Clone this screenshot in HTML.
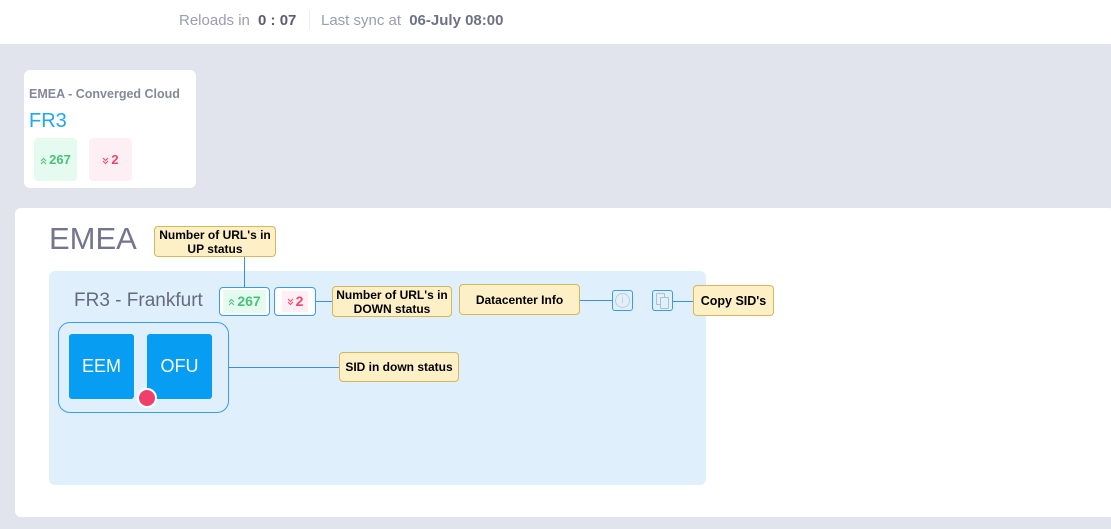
<!DOCTYPE html>
<html><head><style>
*{margin:0;padding:0;box-sizing:border-box}
body{width:1111px;height:529px;background:#e2e4ed;font-family:"Liberation Sans",sans-serif;position:relative;overflow:hidden}
.a{position:absolute}
.note{position:absolute;background:#fdf0c6;border:1px solid #d9b65a;border-radius:4px;font-weight:bold;font-size:12px;color:#000;text-align:center;line-height:14px;display:flex;align-items:center;justify-content:center}
.ln{position:absolute;background:#3a8ee6}
svg.ch{display:inline-block;vertical-align:middle;margin-right:2px}
</style></head><body>
<div class="a" style="left:0;top:0;width:1111px;height:44px;background:#fff"></div>
<div class="a" style="left:179px;top:12px;font-size:15px;color:#9a9db3">Reloads in <b style="color:#5a5d70;margin-left:4px">0 : 07</b></div>
<div class="a" style="left:309px;top:10px;width:1px;height:20px;background:#eee"></div>
<div class="a" style="left:321px;top:12px;font-size:15px;color:#9a9db3">Last sync at <b style="color:#6f7286;margin-left:4px">06-July 08:00</b></div>

<div class="a" style="left:24px;top:70px;width:172px;height:118px;background:#fff;border-radius:6px"></div>
<div class="a" style="left:29px;top:87px;font-size:12.5px;color:#70738a;font-weight:bold;opacity:.85">EMEA - Converged Cloud</div>
<div class="a" style="left:29px;top:110px;font-size:20px;color:#1ea7f5">FR3</div>
<div class="a" style="left:34px;top:138px;width:43px;height:43px;background:#e6fbef;border-radius:4px;color:#48c27a;font-size:13px;font-weight:bold;line-height:43px;text-align:center"><svg class="ch" width="7" height="8" viewBox="0 0 7 8"><path d="M1 4L3.5 1.5 6 4M1 7L3.5 4.5 6 7" stroke="#48c27a" fill="none"/></svg>267</div>
<div class="a" style="left:89px;top:138px;width:43px;height:43px;background:#fdeff3;border-radius:4px;color:#f0466d;font-size:13px;font-weight:bold;line-height:43px;text-align:center"><svg class="ch" width="7" height="8" viewBox="0 0 7 8"><path d="M1 1L3.5 3.5 6 1M1 4L3.5 6.5 6 4" stroke="#f0466d" fill="none"/></svg>2</div>

<div class="a" style="left:15px;top:208px;width:1100px;height:309px;background:#fff;border-radius:6px"></div>
<div class="a" style="left:49px;top:221px;font-size:31px;color:#73768e">EMEA</div>
<div class="a" style="left:49px;top:271px;width:657px;height:214px;background:#dfeffc;border-radius:6px"></div>
<div class="a" style="left:74px;top:290px;font-size:19px;color:#666a7e">FR3 - Frankfurt</div>

<div class="ln" style="left:244px;top:257px;width:1px;height:30px"></div>
<div class="a" style="left:219px;top:287px;width:51px;height:29px;border:1px solid #3a9bf0;border-radius:4px;background:#fff"></div>
<div class="a" style="left:223px;top:290px;width:43px;height:23px;background:#e6fbef;color:#48c27a;font-size:14px;font-weight:bold;line-height:23px;text-align:center"><svg class="ch" width="7" height="8" viewBox="0 0 7 8"><path d="M1 4L3.5 1.5 6 4M1 7L3.5 4.5 6 7" stroke="#48c27a" fill="none"/></svg>267</div>
<div class="a" style="left:274px;top:287px;width:42px;height:29px;border:1px solid #3a9bf0;border-radius:4px;background:#fff"></div>
<div class="a" style="left:282px;top:291px;width:26px;height:21px;background:#fdeff3;color:#f0466d;font-size:14px;font-weight:bold;line-height:21px;text-align:center"><svg class="ch" width="7" height="8" viewBox="0 0 7 8"><path d="M1 1L3.5 3.5 6 1M1 4L3.5 6.5 6 4" stroke="#f0466d" fill="none"/></svg>2</div>
<div class="ln" style="left:316px;top:301px;width:16px;height:1px"></div>

<div class="note" style="left:154px;top:226px;width:122px;height:31px">Number of URL's in<br>UP status</div>
<div class="note" style="left:332px;top:286px;width:120px;height:31px">Number of URL's in<br>DOWN status</div>
<div class="note" style="left:459px;top:284px;width:121px;height:31px">Datacenter Info</div>
<div class="ln" style="left:580px;top:300px;width:32px;height:1px"></div>
<div class="a" style="left:612px;top:290px;width:21px;height:21px;border:1px solid #3a9bf0;border-radius:3px"></div>
<div class="a" style="left:615px;top:293px;width:15px;height:15px;border:1px solid #c5cad6;border-radius:50%;color:#c5cad6;font-size:10px;line-height:13px;text-align:center">i</div>
<div class="a" style="left:652px;top:290px;width:21px;height:21px;border:1px solid #3a9bf0;border-radius:3px"></div>
<div class="a" style="left:656px;top:293px;width:9px;height:12px;border:1.5px solid #b8bdca;border-radius:1px"></div>
<div class="a" style="left:660px;top:297px;width:9px;height:12px;border:1.5px solid #b8bdca;border-radius:1px;background:#dfeffc"></div>
<div class="ln" style="left:673px;top:301px;width:20px;height:1px"></div>
<div class="note" style="left:693px;top:285px;width:81px;height:31px;font-size:12.5px">Copy SID's</div>

<div class="a" style="left:58px;top:322px;width:171px;height:91px;border:1px solid #3a9bf0;border-radius:12px"></div>
<div class="a" style="left:69px;top:334px;width:65px;height:65px;background:#069df3;border-radius:3px;color:#fff;font-size:18px;line-height:65px;text-align:center">EEM</div>
<div class="a" style="left:147px;top:334px;width:65px;height:65px;background:#069df3;border-radius:3px;color:#fff;font-size:18px;line-height:65px;text-align:center">OFU</div>
<div class="a" style="left:137px;top:388px;width:20px;height:20px;background:#ef3f6a;border:2px solid #fff;border-radius:50%"></div>
<div class="ln" style="left:229px;top:367px;width:110px;height:1px"></div>
<div class="note" style="left:339px;top:352px;width:120px;height:30px">SID in down status</div>
</body></html>
